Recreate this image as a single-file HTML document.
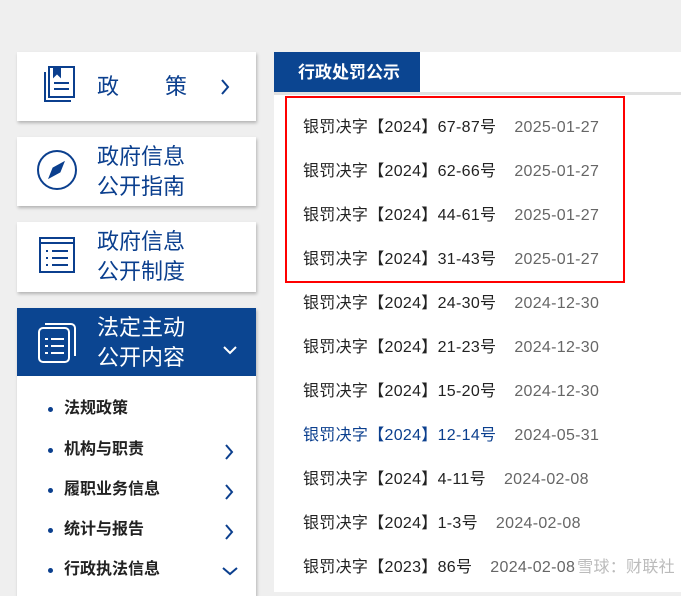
<!DOCTYPE html>
<html><head><meta charset="utf-8"><style>
*{margin:0;padding:0;box-sizing:border-box}
body{width:681px;height:587px;background:#efefef;position:relative;overflow:hidden;font-family:"Liberation Sans","Microsoft YaHei","Noto Sans CJK SC",sans-serif}
.card{position:absolute;left:17px;width:239px;background:#fff;box-shadow:1px 2px 3px rgba(0,0,0,.25)}
.t{position:absolute;left:80px;color:#0b3f8e;font-size:22px;line-height:30px}
.ic{position:absolute}
.sub{position:absolute;left:17px;top:376px;width:239px;height:220px;background:#fff;box-shadow:1px 2px 3px rgba(0,0,0,.25)}
.si{position:absolute;left:31px;font-size:16px;font-weight:bold;color:#222;line-height:20px}
.si:before{content:"";position:absolute;left:0;top:8px;width:5px;height:5px;border-radius:50%;background:#0b3f8e}
.si span{margin-left:16px}
.right{position:absolute;left:274px;top:52px;width:407px;height:540px;background:#fff}
.tab{position:absolute;left:0;top:0;width:146px;height:40px;background:#0b4591;color:#fff;font-weight:bold;font-size:17px;line-height:42px;padding-left:24px}
.line{position:absolute;left:0;top:40px;width:407px;height:3px;background:#e0e0e0}
.row{position:absolute;left:303px;font-size:16px;color:#222;line-height:20px;white-space:nowrap;letter-spacing:0.3px}
.row i{font-style:normal;color:#666;margin-left:18px}
.row.b{color:#0b3f8e}
</style></head><body>
<div class="card" style="top:52px;height:69px">
 <svg class="ic" style="left:21px;top:12px" width="40" height="40" viewBox="0 0 40 40" fill="none" stroke="#0b3f8e" stroke-width="2"><path d="M7 8v29h26"/><rect x="11" y="3" width="25" height="30"/><path d="M16 3v9l3-3 3 3V3" fill="#0b3f8e"/><path d="M16 19h15M16 25h15"/></svg>
 <div class="t" style="top:20px;left:80px;letter-spacing:0">政<span style="margin-left:46px">策</span></div>
 <svg class="ic" style="left:203px;top:27px" width="10" height="16" viewBox="0 0 10 16" fill="none" stroke="#0b3f8e" stroke-width="2"><path d="M2 1l6 7-6 7"/></svg>
</div>
<div class="card" style="top:137px;height:69px">
 <svg class="ic" style="left:19px;top:12px" width="42" height="42" viewBox="0 0 42 42" fill="none" stroke="#0b3f8e" stroke-width="2"><circle cx="21" cy="21" r="19"/><path d="M28 13l-11 6-4 10 11-6z" fill="#0b3f8e" stroke-width="1"/></svg>
 <div class="t" style="top:5px">政府信息<br>公开指南</div>
</div>
<div class="card" style="top:222px;height:70px">
 <svg class="ic" style="left:19px;top:12px" width="42" height="42" viewBox="0 0 42 42" fill="none" stroke="#0b3f8e" stroke-width="2"><path d="M4 4h34v34H4zM4 9h34"/><path d="M10 17h2M16 17h16M10 24h2M16 24h16M10 31h2M16 31h16"/></svg>
 <div class="t" style="top:5px">政府信息<br>公开制度</div>
</div>
<div class="card" style="top:308px;height:68px;background:#0b4591">
 <svg class="ic" style="left:19px;top:11px" width="42" height="46" viewBox="0 0 42 46" fill="none" stroke="#fff" stroke-width="2"><rect x="3" y="9" width="30" height="34" rx="4"/><path d="M9 5h26a4 4 0 0 1 4 4v28"/><path d="M9 20h3M15 20h13M9 27h3M15 27h13M9 34h3M15 34h13"/></svg>
 <div class="t" style="top:5px;color:#fff">法定主动<br>公开内容</div>
 <svg class="ic" style="left:206px;top:37px" width="14" height="10" viewBox="0 0 14 10" fill="none" stroke="#fff" stroke-width="2"><path d="M1 2l6 6 6-6"/></svg>
</div>
<div class="sub">
 <div class="si" style="top:23px"><span>法规政策</span></div>
 <div class="si" style="top:64px"><span>机构与职责</span></div>
 <div class="si" style="top:104px"><span>履职业务信息</span></div>
 <div class="si" style="top:144px"><span>统计与报告</span></div>
 <div class="si" style="top:184px"><span>行政执法信息</span></div>
 <svg class="ic" style="left:207px;top:68px" width="10" height="16" viewBox="0 0 10 16" fill="none" stroke="#0b3f8e" stroke-width="2"><path d="M2 1l6 7-6 7"/></svg>
 <svg class="ic" style="left:207px;top:108px" width="10" height="16" viewBox="0 0 10 16" fill="none" stroke="#0b3f8e" stroke-width="2"><path d="M2 1l6 7-6 7"/></svg>
 <svg class="ic" style="left:207px;top:148px" width="10" height="16" viewBox="0 0 10 16" fill="none" stroke="#0b3f8e" stroke-width="2"><path d="M2 1l6 7-6 7"/></svg>
 <svg class="ic" style="left:205px;top:190px" width="16" height="10" viewBox="0 0 16 10" fill="none" stroke="#0b3f8e" stroke-width="2"><path d="M1 2l7 6 7-6"/></svg>
</div>
<div class="right"><div class="tab">行政处罚公示</div><div class="line"></div></div>
<div class="row" style="top:118px">银罚决字【2024】67-87号<i>2025-01-27</i></div>
<div class="row" style="top:162px">银罚决字【2024】62-66号<i>2025-01-27</i></div>
<div class="row" style="top:206px">银罚决字【2024】44-61号<i>2025-01-27</i></div>
<div class="row" style="top:250px">银罚决字【2024】31-43号<i>2025-01-27</i></div>
<div class="row" style="top:294px">银罚决字【2024】24-30号<i>2024-12-30</i></div>
<div class="row" style="top:338px">银罚决字【2024】21-23号<i>2024-12-30</i></div>
<div class="row" style="top:382px">银罚决字【2024】15-20号<i>2024-12-30</i></div>
<div class="row b" style="top:426px">银罚决字【2024】12-14号<i>2024-05-31</i></div>
<div class="row" style="top:470px">银罚决字【2024】4-11号<i>2024-02-08</i></div>
<div class="row" style="top:514px">银罚决字【2024】1-3号<i>2024-02-08</i></div>
<div class="row" style="top:558px">银罚决字【2023】86号<i>2024-02-08</i><span style="color:#bbb;margin-left:2px">雪球：财联社</span></div>
<div style="position:absolute;left:285px;top:96px;width:340px;height:187px;border:2.5px solid #f00"></div>
</body></html>
